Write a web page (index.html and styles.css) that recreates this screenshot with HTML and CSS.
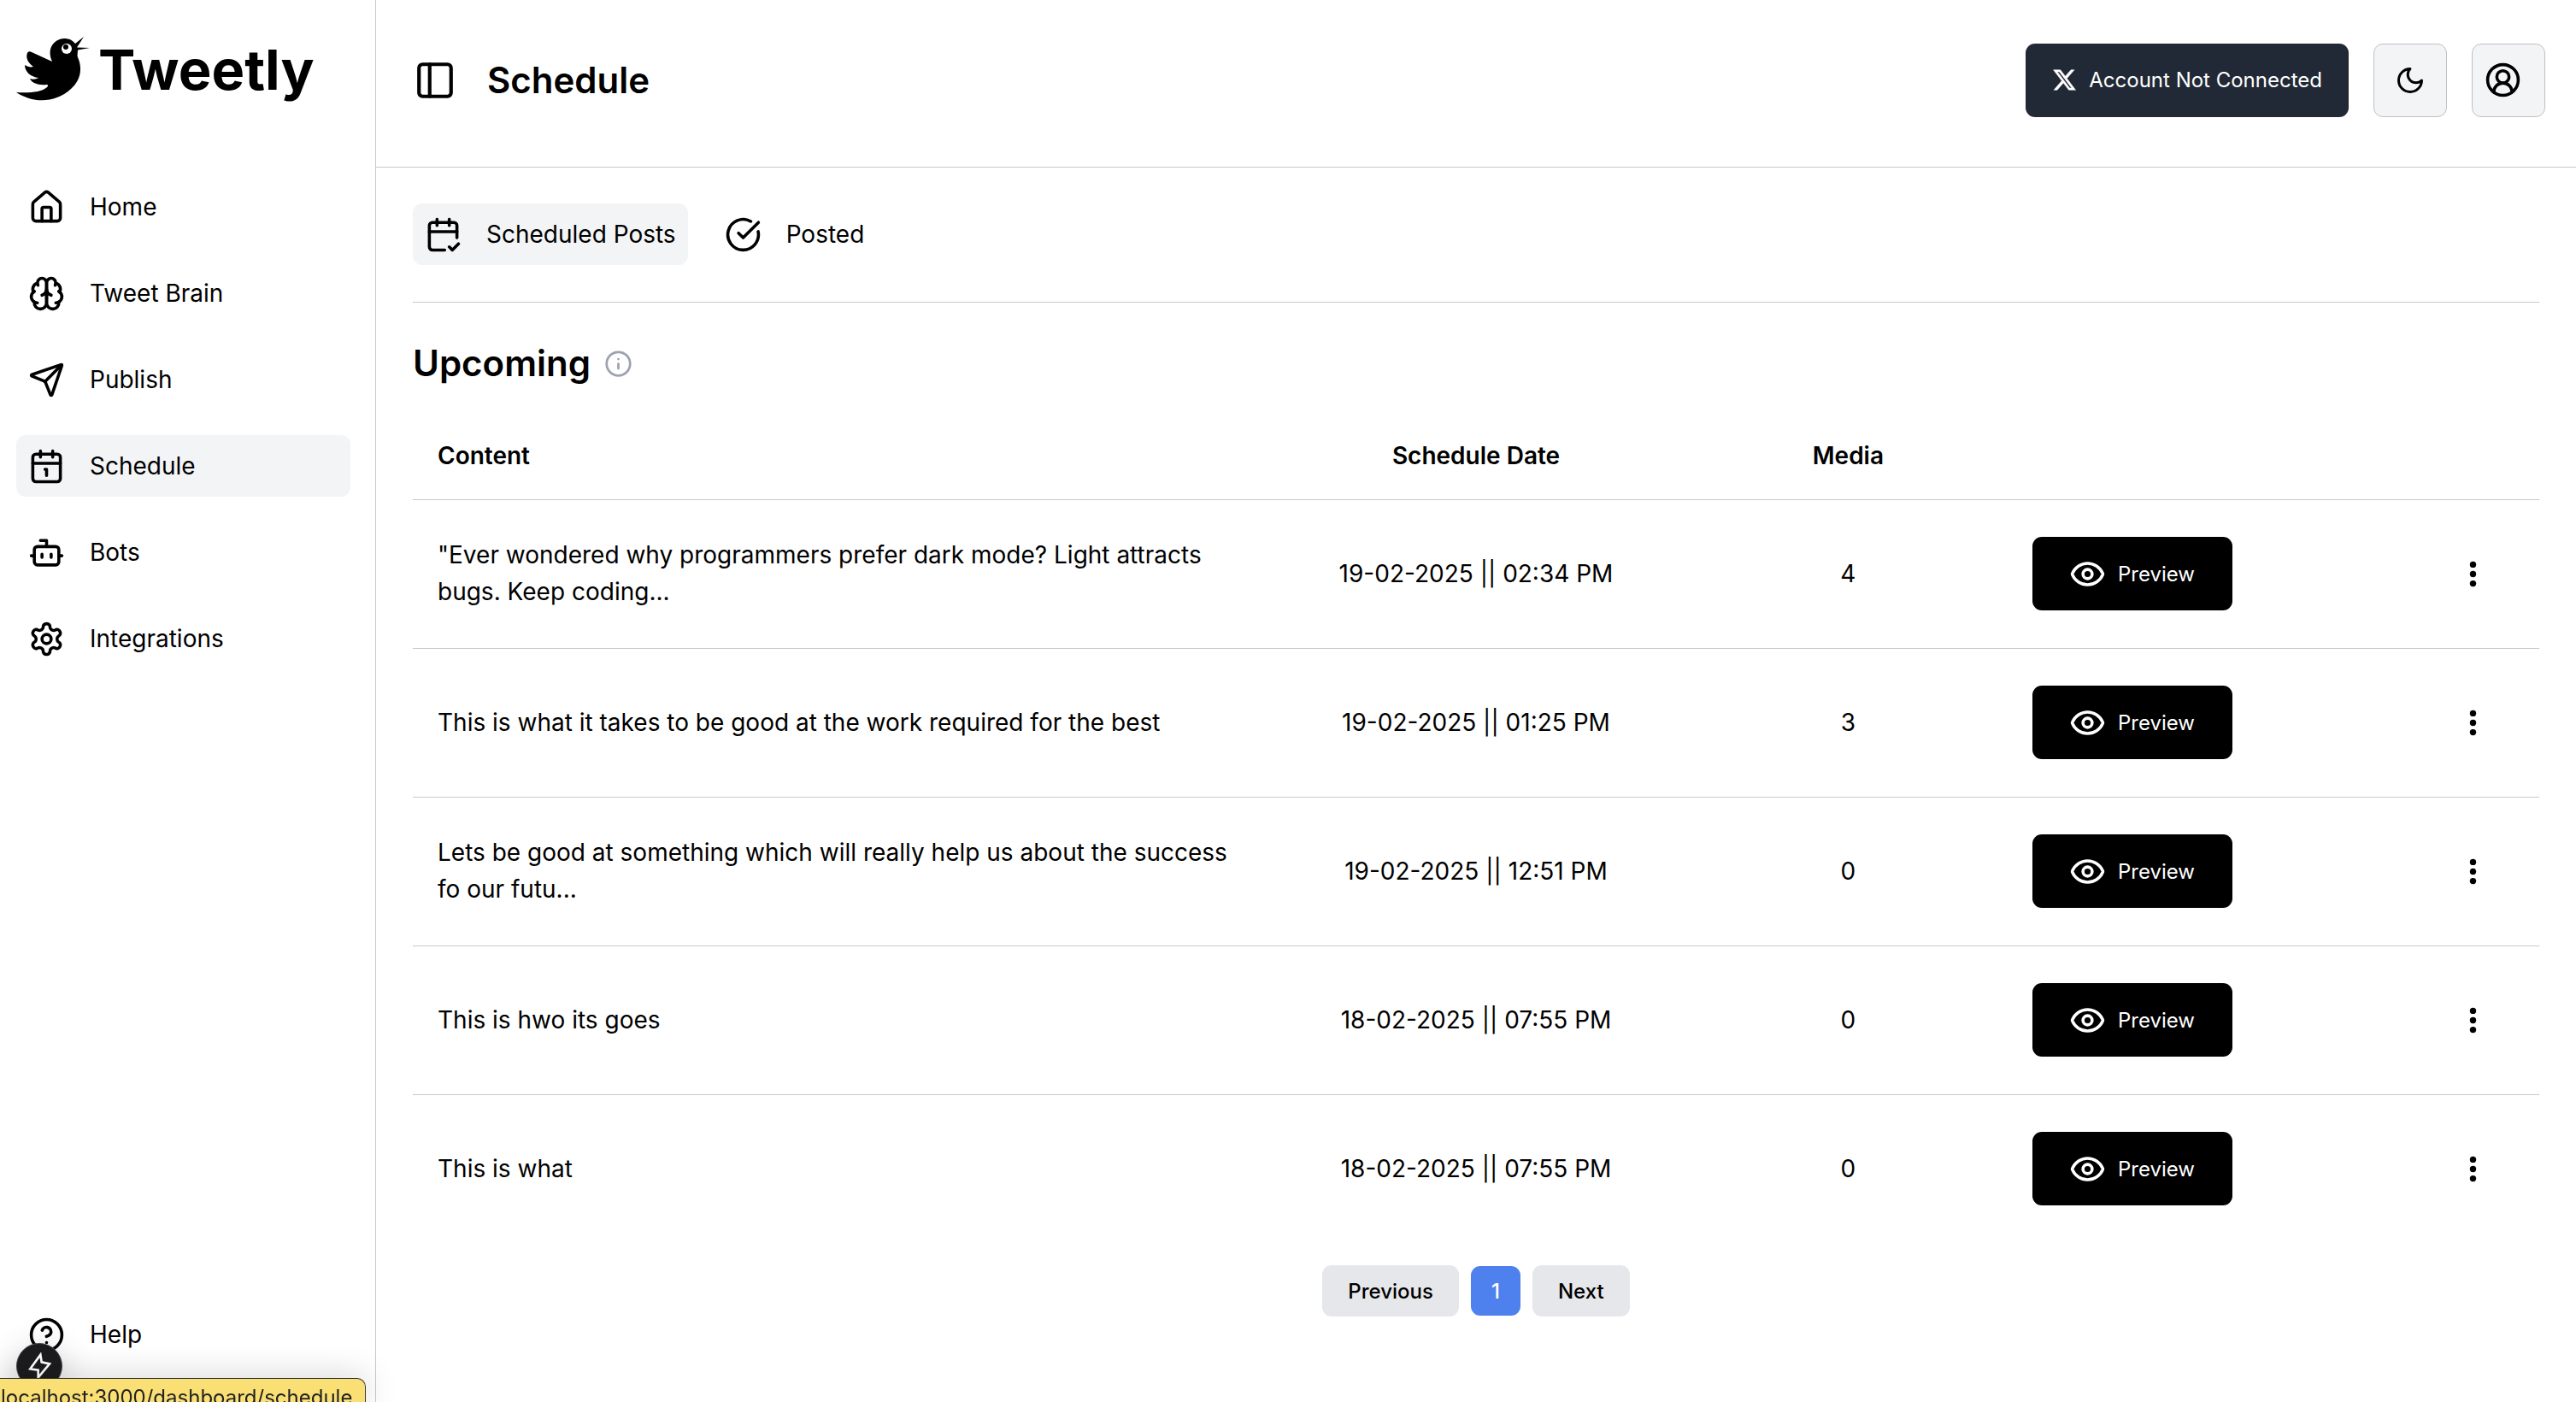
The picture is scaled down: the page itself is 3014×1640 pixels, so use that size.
FILE: index.html
```html
<!DOCTYPE html>
<html lang="en">
<head>
<meta charset="utf-8">
<title>Tweetly - Schedule</title>
<link rel="stylesheet" href="styles.css">
</head>
<body>
<svg class="sprite" aria-hidden="true">
  <symbol id="eye" viewBox="0 0 24 24"><path d="M2.062 12.348a1 1 0 0 1 0-.696 10.75 10.75 0 0 1 19.876 0 1 1 0 0 1 0 .696 10.75 10.75 0 0 1-19.876 0"/><circle cx="12" cy="12" r="3"/></symbol>
  <symbol id="dots" viewBox="0 0 20 20"><circle cx="10" cy="4" r="2"/><circle cx="10" cy="10" r="2"/><circle cx="10" cy="16" r="2"/></symbol>
</svg>
<div class="app">
  <aside class="sidebar">
    <a class="brand" href="#">
      <svg class="bird" viewBox="0 0 88 78" aria-hidden="true">
        <path d="M0 66C14 67 30 66 36 60C38 58 37 57 35 57C26 58 18 55 16 50C19 51 23 51 26 49C17 48 10 42 10 34C13 36 17 37 20 36C13 31 11 25 13 20C14 18 16 18 18 19L42 30C35 15 44 3 57 3C62 3 66 5 69 9L79 1L71 13.500L86 14L72 16.500C72 20 71 23 72 25C79 41 73 54 64 62C45 79 20 79 0 66Z"/>
        <circle cx="59" cy="15" r="6" fill="#fff"/><circle cx="58" cy="13" r="3"/>
      </svg>
      <span>Tweetly</span>
    </a>
    <nav class="nav">
      <a class="nav-item" href="#"><svg class="icon" viewBox="0 0 24 24"><path d="M15 21v-8a1 1 0 0 0-1-1h-4a1 1 0 0 0-1 1v8"/><path d="M3 10a2 2 0 0 1 .709-1.528l7-5.999a2 2 0 0 1 2.582 0l7 5.999A2 2 0 0 1 21 10v9a2 2 0 0 1-2 2H5a2 2 0 0 1-2-2z"/></svg>Home</a>
      <a class="nav-item" href="#"><svg class="icon" viewBox="0 0 24 24"><path d="M12 5a3 3 0 1 0-5.997.125 4 4 0 0 0-2.526 5.77 4 4 0 0 0 .556 6.588A4 4 0 1 0 12 18Z"/><path d="M12 5a3 3 0 1 1 5.997.125 4 4 0 0 1 2.526 5.77 4 4 0 0 1-.556 6.588A4 4 0 1 1 12 18Z"/><path d="M15 13a4.5 4.5 0 0 1-3-4 4.5 4.5 0 0 1-3 4"/><path d="M17.599 6.5a3 3 0 0 0 .399-1.375"/><path d="M6.003 5.125A3 3 0 0 0 6.401 6.5"/><path d="M3.477 10.896a4 4 0 0 1 .585-.396"/><path d="M19.938 10.5a4 4 0 0 1 .585.396"/><path d="M6 18a4 4 0 0 1-1.967-.516"/><path d="M19.967 17.484A4 4 0 0 1 18 18"/></svg>Tweet Brain</a>
      <a class="nav-item" href="#"><svg class="icon" viewBox="0 0 24 24"><path d="M14.536 21.686a.5.5 0 0 0 .937-.024l6.5-19a.496.496 0 0 0-.635-.635l-19 6.5a.5.5 0 0 0-.024.937l7.93 3.18a2 2 0 0 1 1.112 1.11z"/><path d="m21.854 2.147-10.94 10.939"/></svg>Publish</a>
      <a class="nav-item active" href="#"><svg class="icon" viewBox="0 0 24 24"><path d="M8 2v4M16 2v4"/><rect x="3" y="4" width="18" height="18" rx="2"/><path d="M3 10h18M11 14h1v4"/></svg>Schedule</a>
      <a class="nav-item" href="#"><svg class="icon" viewBox="0 0 24 24"><path d="M12 8V4H8"/><rect x="4" y="8" width="16" height="12" rx="2"/><path d="M2 14h2M20 14h2M15 13v2M9 13v2"/></svg>Bots</a>
      <a class="nav-item" href="#"><svg class="icon" viewBox="0 0 24 24"><path d="M12.22 2h-.44a2 2 0 0 0-2 2v.18a2 2 0 0 1-1 1.73l-.43.25a2 2 0 0 1-2 0l-.15-.08a2 2 0 0 0-2.73.73l-.22.38a2 2 0 0 0 .73 2.73l.15.1a2 2 0 0 1 1 1.72v.51a2 2 0 0 1-1 1.74l-.15.09a2 2 0 0 0-.73 2.73l.22.38a2 2 0 0 0 2.73.73l.15-.08a2 2 0 0 1 2 0l.43.25a2 2 0 0 1 1 1.73V20a2 2 0 0 0 2 2h.44a2 2 0 0 0 2-2v-.18a2 2 0 0 1 1-1.73l.43-.25a2 2 0 0 1 2 0l.15.08a2 2 0 0 0 2.73-.73l.22-.39a2 2 0 0 0-.73-2.73l-.15-.08a2 2 0 0 1-1-1.74v-.5a2 2 0 0 1 1-1.74l.15-.09a2 2 0 0 0 .73-2.73l-.22-.38a2 2 0 0 0-2.73-.73l-.15.08a2 2 0 0 1-2 0l-.43-.25a2 2 0 0 1-1-1.73V4a2 2 0 0 0-2-2z"/><circle cx="12" cy="12" r="3"/></svg>Integrations</a>
    </nav>
    <a class="nav-item help" href="#"><svg class="icon" viewBox="0 0 24 24"><circle cx="12" cy="12" r="10"/><path d="M9.09 9a3 3 0 0 1 5.83 1c0 2-3 3-3 3M12 17h.01"/></svg>Help</a>
  </aside>
  <div class="page">
    <header class="topbar">
      <button class="toggle" type="button" aria-label="Toggle sidebar"><svg class="icon icon-lg" viewBox="0 0 24 24"><rect x="3" y="3" width="18" height="18" rx="2"/><path d="M9 3v18"/></svg></button>
      <h1>Schedule</h1>
      <div class="actions">
        <button class="account" type="button"><svg class="xlogo" viewBox="0 0 24 24"><path d="M18.244 2.25h3.308l-7.227 8.26 8.502 11.24H16.17l-5.214-6.817L4.99 21.75H1.68l7.73-8.835L1.254 2.25H8.08l4.713 6.231zm-1.161 17.52h1.833L7.084 4.126H5.117z"/></svg>Account Not Connected</button>
        <button class="square" type="button" aria-label="Dark mode"><svg class="icon icon-sm" viewBox="0 0 24 24"><path d="M12 3a6 6 0 0 0 9 9 9 9 0 1 1-9-9Z"/></svg></button>
        <button class="square profile" type="button" aria-label="Profile"><svg class="icon" viewBox="0 0 24 24"><path d="M18 20a6 6 0 0 0-12 0"/><circle cx="12" cy="10" r="4"/><circle cx="12" cy="12" r="10"/></svg></button>
      </div>
    </header>
    <main class="content">
      <div class="tabs">
        <button class="tab active" type="button"><svg class="icon" viewBox="0 0 24 24"><path d="M8 2v4M16 2v4"/><path d="M21 14V6a2 2 0 0 0-2-2H5a2 2 0 0 0-2 2v14a2 2 0 0 0 2 2h8"/><path d="M3 10h18M16 20l2 2 4-4"/></svg>Scheduled Posts</button>
        <button class="tab" type="button"><svg class="icon" viewBox="0 0 24 24"><path d="M21.801 10A10 10 0 1 1 17 3.335"/><path d="m9 11 3 3L22 4"/></svg>Posted</button>
      </div>
      <div class="heading">
        <h2>Upcoming</h2>
        <svg class="icon info" viewBox="0 0 24 24"><circle cx="12" cy="12" r="10"/><path d="M12 16v-4M12 8h.01"/></svg>
      </div>
      <table class="posts">
        <thead>
          <tr><th class="c-content" scope="col">Content</th><th class="c-date" scope="col">Schedule Date</th><th class="c-media" scope="col">Media</th><td class="c-preview"></td><td class="c-menu"></td></tr>
        </thead>
        <tbody>
          <tr><td>"Ever wondered why programmers prefer dark mode? Light attracts bugs. Keep coding...</td><td class="c-date">19-02-2025 || 02:34 PM</td><td class="c-media">4</td><td><button class="preview" type="button"><svg class="icon"><use href="#eye"/></svg>Preview</button></td><td class="c-menu"><button class="menu" type="button" aria-label="Options"><svg class="dots"><use href="#dots"/></svg></button></td></tr>
          <tr><td>This is what it takes to be good at the work required for the best</td><td class="c-date">19-02-2025 || 01:25 PM</td><td class="c-media">3</td><td><button class="preview" type="button"><svg class="icon"><use href="#eye"/></svg>Preview</button></td><td class="c-menu"><button class="menu" type="button" aria-label="Options"><svg class="dots"><use href="#dots"/></svg></button></td></tr>
          <tr><td>Lets be good at something which will really help us about the success fo our futu...</td><td class="c-date">19-02-2025 || 12:51 PM</td><td class="c-media">0</td><td><button class="preview" type="button"><svg class="icon"><use href="#eye"/></svg>Preview</button></td><td class="c-menu"><button class="menu" type="button" aria-label="Options"><svg class="dots"><use href="#dots"/></svg></button></td></tr>
          <tr><td>This is hwo its goes</td><td class="c-date">18-02-2025 || 07:55 PM</td><td class="c-media">0</td><td><button class="preview" type="button"><svg class="icon"><use href="#eye"/></svg>Preview</button></td><td class="c-menu"><button class="menu" type="button" aria-label="Options"><svg class="dots"><use href="#dots"/></svg></button></td></tr>
          <tr><td>This is what</td><td class="c-date">18-02-2025 || 07:55 PM</td><td class="c-media">0</td><td><button class="preview" type="button"><svg class="icon"><use href="#eye"/></svg>Preview</button></td><td class="c-menu"><button class="menu" type="button" aria-label="Options"><svg class="dots"><use href="#dots"/></svg></button></td></tr>
        </tbody>
      </table>
      <nav class="pager" aria-label="Pagination">
        <button class="page-btn" type="button">Previous</button>
        <button class="page-btn current" type="button">1</button>
        <button class="page-btn" type="button">Next</button>
      </nav>
    </main>
  </div>
</div>
<button class="dev-badge" type="button" aria-label="Dev tools"><svg viewBox="0 0 24 24"><path d="M13 2 4 14.500l7 1V22l10-12-7-1.500z"/></svg></button>
<div class="status">localhost:3000/dashboard/schedule</div>
</body>
</html>
```
FILE: styles.css
```css
* { box-sizing: border-box; }

body {
  margin: 0;
  font: 28px/43px Inter, "Liberation Sans", sans-serif;
  color: #000;
  background: #fff;
}

button {
  font: inherit;
  color: inherit;
  border: 0;
  padding: 0;
  background: none;
  cursor: pointer;
}

a { color: inherit; text-decoration: none; }

.sprite { position: absolute; width: 0; height: 0; }

.icon {
  width: 43px;
  height: 43px;
  flex: none;
  fill: none;
  stroke: currentColor;
  stroke-width: 2;
  stroke-linecap: round;
  stroke-linejoin: round;
}
.icon-lg { width: 50px; height: 50px; }
.icon-sm { width: 36px; height: 36px; }

.app { display: flex; min-height: 100vh; }

/* Sidebar */
.sidebar {
  flex: 0 0 440px;
  display: flex;
  flex-direction: column;
  padding: 37px 29px 43px 19px;
  border-right: 1px solid #c9c9cb;
}
.brand {
  display: flex;
  align-items: center;
  gap: 8px;
  height: 88px;
  font-size: 65px;
  font-weight: 700;
}
.bird { width: 88px; height: 78px; }
.nav { display: flex; flex-direction: column; gap: 29px; margin-top: 81px; }
.nav-item {
  display: flex;
  align-items: center;
  gap: 29px;
  height: 72px;
  padding: 0 14px;
  border-radius: 11px;
}
.active { background: #f3f4f6; }
.help { margin-top: auto; }

/* Top bar */
.page { flex: 1; min-width: 0; }
.topbar {
  display: flex;
  align-items: center;
  height: 196px;
  padding: 0 36px 8px 44px;
  border-bottom: 1px solid #c9c9cb;
}
.toggle { display: flex; }
h1, h2 { margin: 0; font-size: 42px; font-weight: 600; line-height: 50px; }
h1 { margin-left: 36px; }
.actions { display: flex; gap: 29px; margin-left: auto; }
.account {
  display: flex;
  align-items: center;
  gap: 14px;
  height: 86px;
  padding: 0 31px;
  border-radius: 11px;
  background: #222936;
  color: #fff;
  font-size: 24px;
}
.xlogo { width: 29px; height: 29px; fill: currentColor; stroke: currentColor; stroke-width: .4; }
.square {
  display: flex;
  align-items: center;
  justify-content: center;
  width: 86px;
  height: 86px;
  border: 1px solid #bfc1c4;
  border-radius: 11px;
  background: #f3f4f6;
}
.profile { justify-content: flex-start; padding-left: 14px; }

/* Content */
.content { padding: 42px 43px; }
.tabs {
  display: flex;
  gap: 29px;
  padding-bottom: 43px;
  border-bottom: 1px solid #c9c9cb;
}
.tab {
  display: flex;
  align-items: center;
  gap: 29px;
  height: 72px;
  padding: 0 14px;
  border-radius: 11px;
}
.heading { display: flex; align-items: center; gap: 16px; margin-top: 46px; }
.info { width: 33px; height: 33px; color: #9ca3af; }

.posts {
  width: 100%;
  margin-top: 28px;
  table-layout: fixed;
  border-collapse: collapse;
}
.posts th, .posts td { padding: 0 29px; text-align: left; }
.posts th { padding-top: 6px; font-weight: 600; }
.posts thead tr { height: 106px; }
.posts tbody tr { height: 174px; }
.posts tr { border-bottom: 1px solid #c9c9cb; }
.posts tbody tr:last-child { border-bottom: 0; }
.c-content { width: 40%; }
.posts .c-date { width: 20%; text-align: center; }
.posts .c-media { width: 15%; text-align: center; }
.c-preview { width: 15%; }
.posts .c-menu { width: 10%; text-align: right; }

.preview {
  display: flex;
  align-items: center;
  gap: 14px;
  height: 86px;
  padding: 0 44px 0 43px;
  border-radius: 11px;
  background: #000;
  color: #fff;
  font-size: 24px;
}
.menu { display: flex; justify-content: center; width: 98px; margin-left: auto; }
.dots { width: 37px; height: 37px; }

.pager { display: flex; justify-content: center; align-items: center; gap: 14px; margin-top: 26px; }
.page-btn {
  height: 60px;
  padding: 0 30px;
  border-radius: 11px;
  background: #e5e7eb;
  font-size: 24px;
  font-weight: 500;
}
.current { width: 58px; height: 58px; padding: 0; background: #4f81ee; color: #fff; }

/* Overlays in the window corner */
.dev-badge {
  position: fixed;
  left: 19px;
  bottom: 15px;
  display: flex;
  align-items: center;
  justify-content: center;
  width: 54px;
  height: 54px;
  border: 1px solid #4a4a4d;
  border-radius: 50%;
  background: #1c1c1e;
  box-shadow: 0 8px 40px rgba(0, 0, 0, .2);
}
.dev-badge svg { width: 32px; height: 32px; fill: none; stroke: #fff; stroke-width: 2; }
.status {
  position: fixed;
  left: 0;
  bottom: 0;
  height: 28px;
  padding: 0 15px 0 1px;
  overflow: hidden;
  border: 1px solid #3a3a3a;
  border-width: 1px 1px 0 0;
  border-radius: 0 10px 0 0;
  background: #fadf74;
  color: #222;
  font-size: 24px;
  box-shadow: 0 0 40px rgba(0, 0, 0, .2);
}
```
